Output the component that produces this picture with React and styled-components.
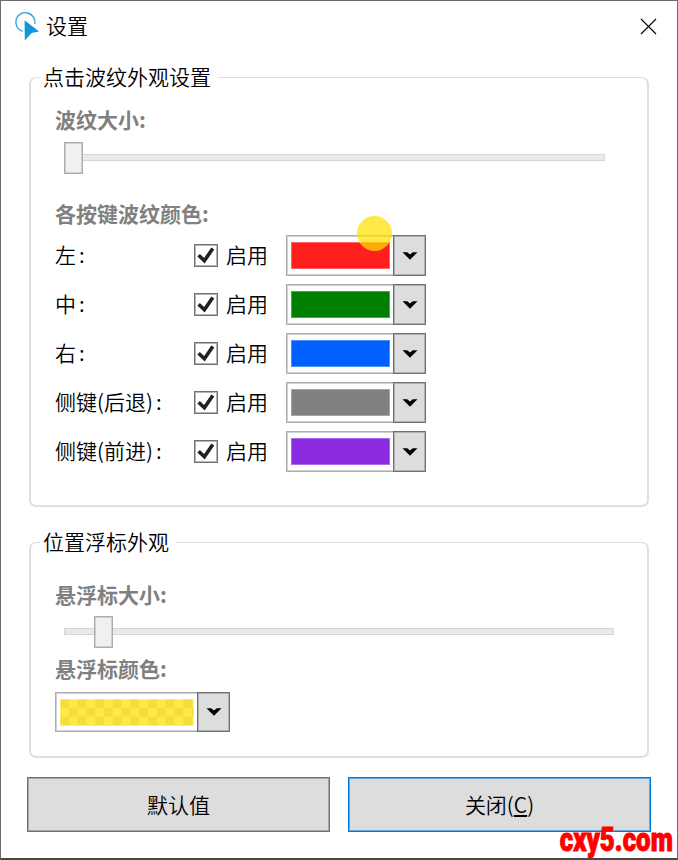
import React, { useState } from "react";
import styled, { createGlobalStyle } from "styled-components";

const KEYS = [
  { name: "左", color: "#ff1f1f" },
  { name: "中", color: "#008000" },
  { name: "右", color: "#005fff" },
  { name: "侧键(后退)", color: "#808080" },
  { name: "侧键(前进)", color: "#8a2be2" },
];

function Combo({ wide, color }) {
  return (
    <ComboBox $wide={wide}>
      <SwatchCell>{wide ? <CheckerSwatch /> : <Swatch $color={color} />}</SwatchCell>
      <DropButton type="button">
        <svg width="16" height="10" viewBox="0 0 16 10">
          <path d="M0.5 1.2H5.2L8 3.6L10.8 1.2H15.5L8 8.8Z" fill="#000" />
        </svg>
      </DropButton>
    </ComboBox>
  );
}

function KeyRow({ name, color }) {
  const [enabled, setEnabled] = useState(true);

  return (
    <Row>
      <KeyName>
        {name}
        <Colon>:</Colon>
      </KeyName>
      <CheckLabel onClick={() => setEnabled(!enabled)}>
        <CheckBox>
          {enabled && (
            <svg width="20" height="19" viewBox="0 0 20 19">
              <path d="M2.6 9.2L8.4 14.8L16.8 2.4" fill="none" stroke="#212121" strokeWidth="3.6" />
            </svg>
          )}
        </CheckBox>
        <CheckText>启用</CheckText>
      </CheckLabel>
      <Combo color={color} />
    </Row>
  );
}

export default function App() {
  return (
    <Window>
      <GlobalStyle />
      <TitleBar>
        <svg width="26" height="32" viewBox="0 0 26 32">
          <path
            d="M8.4 20.4A9.6 9.6 0 1 1 20.8 13.2"
            fill="none"
            stroke="#3a9fd8"
            strokeWidth="1.4"
          />
          <path d="M10.6 9.2L25 20.6L17.6 22L10.8 29.5Z" fill="#1296db" />
        </svg>
        <Title>设置</Title>
        <CloseButton type="button">
          <svg width="17" height="17" viewBox="0 0 17 17">
            <path d="M1 1L16 16M16 1L1 16" stroke="#000" strokeWidth="1.1" />
          </svg>
        </CloseButton>
      </TitleBar>

      <Group $height={443}>
        <Legend>点击波纹外观设置</Legend>
        <Heading $top={15}>波纹大小:</Heading>
        <Slider $top={9} $width={541}>
          <Thumb $start={0} />
        </Slider>
        <Heading $top={26}>各按键波纹颜色:</Heading>
        <Rows>
          {KEYS.map((key) => (
            <KeyRow key={key.name} {...key} />
          ))}
        </Rows>
      </Group>

      <Group $height={229} $gap={22}>
        <Legend>位置浮标外观</Legend>
        <Heading $top={25}>悬浮标大小:</Heading>
        <Slider $top={8} $width={550}>
          <Thumb $start={30} />
        </Slider>
        <Heading $top={7}>悬浮标颜色:</Heading>
        <FloatColor>
          <Combo wide />
        </FloatColor>
      </Group>

      <Footer>
        <Button type="button">默认值</Button>
        <Button type="button" $primary>
          关闭(<u>C</u>)
        </Button>
      </Footer>

      <Pointer />
      <Watermark>cxy5.com</Watermark>
    </Window>
  );
}

const GlobalStyle = createGlobalStyle`
  *,
  *::before,
  *::after {
    box-sizing: border-box;
  }

  body {
    margin: 0;
    background: #fff;
  }

  button {
    font: inherit;
    color: inherit;
    padding: 0;
  }

  svg {
    display: block;
  }
`;

const Window = styled.div`
  position: relative;
  width: 678px;
  height: 860px;
  overflow: hidden;
  background: #fff;
  border: 1px solid #6d6b6c;
  border-bottom: 2px solid #4a4644;
  font-family: "Noto Sans CJK SC", sans-serif;
  font-size: 21px;
  font-weight: 350;
  line-height: 27px;
  color: #000;
`;

const TitleBar = styled.header`
  display: flex;
  align-items: flex-start;
  height: 63px;
  padding: 10px 20px 0 13px;
`;

const Title = styled.span`
  margin-left: 6px;
  padding-top: 1px;
`;

const CloseButton = styled.button`
  margin: 7px 0 0 auto;
  border: none;
  background: none;
`;

const Group = styled.fieldset`
  display: block;
  width: 620px;
  height: ${(props) => props.$height}px;
  margin: ${(props) => props.$gap || 0}px 0 0 28px;
  padding: 0 0 0 24px;
  border: 2px solid #d8e1e8;
  border-top-width: 1px;
  border-radius: 7px;
`;

const Legend = styled.legend`
  height: 27px;
  margin-left: -15px;
  padding: 0 7px 0 3px;
  line-height: 24px;
`;

const Heading = styled.div`
  margin-top: ${(props) => props.$top}px;
  font-weight: 700;
  color: #808080;
`;

const Slider = styled.div`
  display: flex;
  align-items: center;
  width: ${(props) => props.$width}px;
  height: 32px;
  margin: ${(props) => props.$top}px 0 0 9px;
  background:
    linear-gradient(#e7eaea, #e7eaea) 1px 13px / calc(100% - 2px) 5px no-repeat,
    linear-gradient(#d6d6d6, #d6d6d6) 0 12px / 100% 7px no-repeat;
`;

const Thumb = styled.div`
  width: 19px;
  height: 32px;
  margin-left: ${(props) => props.$start}px;
  background: #f0f0f0;
  border: 1px solid #acacac;
  box-shadow: inset 0 0 0 1px #cfcfcf;
`;

const Rows = styled.div`
  display: grid;
  grid-auto-rows: 41px;
  gap: 8px;
  margin-top: 8px;
`;

const Row = styled.div`
  display: flex;
  align-items: center;
`;

const KeyName = styled.span`
  width: 139px;
  padding-bottom: 2px;
  white-space: nowrap;
`;

const Colon = styled.span`
  margin-left: 3px;
`;

const CheckLabel = styled.div`
  display: flex;
  align-items: center;
  width: 92px;
`;

const CheckBox = styled.span`
  display: flex;
  align-items: center;
  justify-content: center;
  width: 24px;
  height: 23px;
  border: 1px solid #707070;
  box-shadow: inset 0 0 0 1px #b5b5b5;
`;

const CheckText = styled.span`
  padding: 0 0 3px 8px;
`;

const ComboBox = styled.div`
  display: flex;
  width: ${(props) => (props.$wide ? 175 : 140)}px;
  height: ${(props) => (props.$wide ? 40 : 41)}px;
`;

const SwatchCell = styled.div`
  display: flex;
  flex: 1;
  align-items: center;
  padding: 0 3px 0 4px;
  border: 1px solid #abadb3;
  border-right: none;
  box-shadow: inset 1px 1px 0 #d0d1d5, inset 0 -1px 0 #d0d1d5;
`;

const Swatch = styled.div`
  width: 100%;
  height: 27px;
  background: ${(props) => props.$color};
  box-shadow: inset 0 0 0 1px rgba(255, 255, 255, 0.3);
`;

const CheckerSwatch = styled.div`
  width: 100%;
  height: 27px;
  background: repeating-conic-gradient(#ffe945 0 25%, #f4df3a 0 50%) 0 0 / 17.6px 17.6px;
  box-shadow: inset 0 0 0 1px rgba(255, 255, 255, 0.3);
`;

const DropButton = styled.button`
  display: flex;
  align-items: center;
  justify-content: center;
  width: 33px;
  background: #ddd;
  border: 1px solid #707070;
  box-shadow: inset 0 0 0 1px #b0b0b0;
`;

const FloatColor = styled.div`
  margin-top: 10px;
`;

const Footer = styled.footer`
  display: flex;
  gap: 18px;
  margin: 19px 0 0 26px;
`;

const Button = styled.button`
  width: 303px;
  height: 55px;
  background: #ddd;
  border: 1px solid ${(props) => (props.$primary ? "#0078d7" : "#707070")};
  box-shadow: inset 0 0 0 1px ${(props) => (props.$primary ? "#62a8df" : "#a6a6a6")};

  u {
    text-underline-offset: 2px;
  }
`;

const Pointer = styled.div`
  position: absolute;
  top: 215px;
  left: 356px;
  width: 35px;
  height: 35px;
  border-radius: 50%;
  background: rgba(255, 225, 0, 0.72);
`;

const Watermark = styled.div`
  position: absolute;
  right: 4px;
  bottom: 2px;
  font-family: "Roboto", "Liberation Sans", sans-serif;
  font-size: 34px;
  font-weight: 900;
  line-height: 34px;
  color: #f00;
  -webkit-text-stroke: 1px #f00;
  transform: scaleX(0.76);
  transform-origin: right bottom;
`;
